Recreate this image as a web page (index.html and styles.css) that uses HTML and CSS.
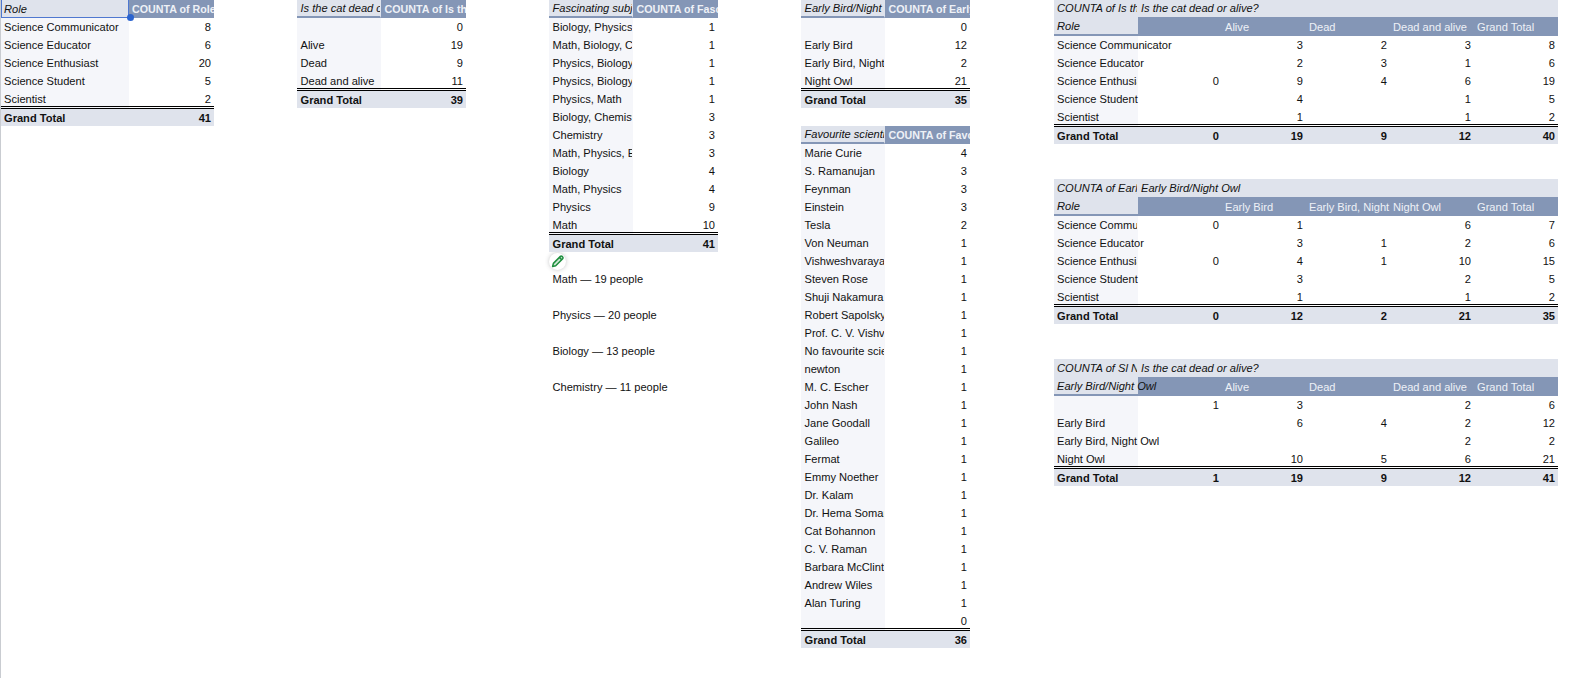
FILE: index.html
```html
<!DOCTYPE html>
<html lang="en">
<head>
<meta charset="utf-8">
<title>Pivot tables</title>
<link rel="stylesheet" href="styles.css">
</head>
<body>
<main class="sheet">
  <section class="block block-wide">
    <table class="pivot pivot-first">
      <tr><th class="corner selected">Role<span class="handle"></span></th><th class="head clip">COUNTA of Role</th></tr>
      <tr><td class="label">Science Communicator</td><td class="num">8</td></tr>
      <tr><td class="label">Science Educator</td><td class="num">6</td></tr>
      <tr><td class="label">Science Enthusiast</td><td class="num">20</td></tr>
      <tr><td class="label">Science Student</td><td class="num">5</td></tr>
      <tr><td class="label">Scientist</td><td class="num">2</td></tr>
      <tr class="grand"><td>Grand Total</td><td class="num">41</td></tr>
    </table>
  </section>

  <section class="block">
    <table class="pivot pivot-narrow">
      <tr><th class="corner clip">Is the cat dead or alive?</th><th class="head clip">COUNTA of Is the cat dead or alive?</th></tr>
      <tr><td class="label"></td><td class="num">0</td></tr>
      <tr><td class="label">Alive</td><td class="num">19</td></tr>
      <tr><td class="label">Dead</td><td class="num">9</td></tr>
      <tr><td class="label">Dead and alive</td><td class="num">11</td></tr>
      <tr class="grand"><td>Grand Total</td><td class="num">39</td></tr>
    </table>
  </section>

  <section class="block">
    <table class="pivot pivot-narrow">
      <tr><th class="corner clip">Fascinating subj</th><th class="head clip">COUNTA of Fasc</th></tr>
      <tr><td class="label clip">Biology, Physics</td><td class="num">1</td></tr>
      <tr><td class="label clip">Math, Biology, C</td><td class="num">1</td></tr>
      <tr><td class="label clip">Physics, Biology</td><td class="num">1</td></tr>
      <tr><td class="label clip">Physics, Biology</td><td class="num">1</td></tr>
      <tr><td class="label clip">Physics, Math</td><td class="num">1</td></tr>
      <tr><td class="label clip">Biology, Chemistry</td><td class="num">3</td></tr>
      <tr><td class="label clip">Chemistry</td><td class="num">3</td></tr>
      <tr><td class="label clip">Math, Physics, E</td><td class="num">3</td></tr>
      <tr><td class="label clip">Biology</td><td class="num">4</td></tr>
      <tr><td class="label clip">Math, Physics</td><td class="num">4</td></tr>
      <tr><td class="label clip">Physics</td><td class="num">9</td></tr>
      <tr><td class="label clip">Math</td><td class="num">10</td></tr>
      <tr class="grand"><td>Grand Total</td><td class="num">41</td></tr>
    </table>
    <div class="edit-row">
      <span class="edit-chip">
        <svg width="14" height="14" viewBox="0 0 14 14" aria-hidden="true"><path class="pencil" d="M2.4 9.4 9.4 2.4a1.2 1.2 0 0 1 1.7 0l.6.6a1.2 1.2 0 0 1 0 1.7L4.7 11.7 1.6 12.5Z"/><path class="pencil" d="M8.4 3.4 10.7 5.7"/></svg>
      </span>
    </div>
    <p class="note">Math — 19 people</p>
    <p class="note">Physics — 20 people</p>
    <p class="note">Biology — 13 people</p>
    <p class="note">Chemistry — 11 people</p>
  </section>

  <section class="block">
    <table class="pivot pivot-narrow">
      <tr><th class="corner clip">Early Bird/Night Owl</th><th class="head clip">COUNTA of Early Bird/Night Owl</th></tr>
      <tr><td class="label"></td><td class="num">0</td></tr>
      <tr><td class="label clip">Early Bird</td><td class="num">12</td></tr>
      <tr><td class="label clip">Early Bird, Night Owl</td><td class="num">2</td></tr>
      <tr><td class="label clip">Night Owl</td><td class="num">21</td></tr>
      <tr class="grand"><td>Grand Total</td><td class="num">35</td></tr>
    </table>
    <table class="pivot pivot-narrow pivot-next">
      <tr><th class="corner clip">Favourite scientist</th><th class="head clip">COUNTA of Favo</th></tr>
      <tr><td class="label clip">Marie Curie</td><td class="num">4</td></tr>
      <tr><td class="label clip">S. Ramanujan</td><td class="num">3</td></tr>
      <tr><td class="label clip">Feynman</td><td class="num">3</td></tr>
      <tr><td class="label clip">Einstein</td><td class="num">3</td></tr>
      <tr><td class="label clip">Tesla</td><td class="num">2</td></tr>
      <tr><td class="label clip">Von Neuman</td><td class="num">1</td></tr>
      <tr><td class="label clip">Vishweshvaraya</td><td class="num">1</td></tr>
      <tr><td class="label clip">Steven Rose</td><td class="num">1</td></tr>
      <tr><td class="label clip">Shuji Nakamura</td><td class="num">1</td></tr>
      <tr><td class="label clip">Robert Sapolsky</td><td class="num">1</td></tr>
      <tr><td class="label clip">Prof. C. V. Vishv</td><td class="num">1</td></tr>
      <tr><td class="label clip">No favourite scientist</td><td class="num">1</td></tr>
      <tr><td class="label clip">newton</td><td class="num">1</td></tr>
      <tr><td class="label clip">M. C. Escher</td><td class="num">1</td></tr>
      <tr><td class="label clip">John Nash</td><td class="num">1</td></tr>
      <tr><td class="label clip">Jane Goodall</td><td class="num">1</td></tr>
      <tr><td class="label clip">Galileo</td><td class="num">1</td></tr>
      <tr><td class="label clip">Fermat</td><td class="num">1</td></tr>
      <tr><td class="label clip">Emmy Noether</td><td class="num">1</td></tr>
      <tr><td class="label clip">Dr. Kalam</td><td class="num">1</td></tr>
      <tr><td class="label clip">Dr. Hema Soman</td><td class="num">1</td></tr>
      <tr><td class="label clip">Cat Bohannon</td><td class="num">1</td></tr>
      <tr><td class="label clip">C. V. Raman</td><td class="num">1</td></tr>
      <tr><td class="label clip">Barbara McClintock</td><td class="num">1</td></tr>
      <tr><td class="label clip">Andrew Wiles</td><td class="num">1</td></tr>
      <tr><td class="label clip">Alan Turing</td><td class="num">1</td></tr>
      <tr><td class="label"></td><td class="num">0</td></tr>
      <tr class="grand"><td>Grand Total</td><td class="num">36</td></tr>
    </table>
  </section>

  <section class="block block-cross">
    <table class="pivot cross">
      <tr class="band"><th class="clip">COUNTA of Is the cat</th><th colspan="5">Is the cat dead or alive?</th></tr>
      <tr><th class="corner">Role</th><th class="head"></th><th class="head">Alive</th><th class="head">Dead</th><th class="head">Dead and alive</th><th class="head">Grand Total</th></tr>
      <tr><td class="label">Science Communicator</td><td></td><td class="num">3</td><td class="num">2</td><td class="num">3</td><td class="num">8</td></tr>
      <tr><td class="label">Science Educator</td><td></td><td class="num">2</td><td class="num">3</td><td class="num">1</td><td class="num">6</td></tr>
      <tr><td class="label clip">Science Enthusiast</td><td class="num">0</td><td class="num">9</td><td class="num">4</td><td class="num">6</td><td class="num">19</td></tr>
      <tr><td class="label">Science Student</td><td></td><td class="num">4</td><td></td><td class="num">1</td><td class="num">5</td></tr>
      <tr><td class="label">Scientist</td><td></td><td class="num">1</td><td></td><td class="num">1</td><td class="num">2</td></tr>
      <tr class="grand"><td>Grand Total</td><td class="num">0</td><td class="num">19</td><td class="num">9</td><td class="num">12</td><td class="num">40</td></tr>
    </table>

    <table class="pivot cross cross-next">
      <tr class="band"><th class="clip">COUNTA of Early Bird</th><th colspan="5">Early Bird/Night Owl</th></tr>
      <tr><th class="corner">Role</th><th class="head"></th><th class="head">Early Bird</th><th class="head clip">Early Bird, Night Owl</th><th class="head">Night Owl</th><th class="head">Grand Total</th></tr>
      <tr><td class="label clip">Science Communicator</td><td class="num">0</td><td class="num">1</td><td></td><td class="num">6</td><td class="num">7</td></tr>
      <tr><td class="label">Science Educator</td><td></td><td class="num">3</td><td class="num">1</td><td class="num">2</td><td class="num">6</td></tr>
      <tr><td class="label clip">Science Enthusiast</td><td class="num">0</td><td class="num">4</td><td class="num">1</td><td class="num">10</td><td class="num">15</td></tr>
      <tr><td class="label">Science Student</td><td></td><td class="num">3</td><td></td><td class="num">2</td><td class="num">5</td></tr>
      <tr><td class="label">Scientist</td><td></td><td class="num">1</td><td></td><td class="num">1</td><td class="num">2</td></tr>
      <tr class="grand"><td>Grand Total</td><td class="num">0</td><td class="num">12</td><td class="num">2</td><td class="num">21</td><td class="num">35</td></tr>
    </table>

    <table class="pivot cross cross-next">
      <tr class="band"><th class="clip">COUNTA of Sl N</th><th colspan="5">Is the cat dead or alive?</th></tr>
      <tr><th class="corner">Early Bird/Night Owl</th><th class="head"></th><th class="head">Alive</th><th class="head">Dead</th><th class="head">Dead and alive</th><th class="head">Grand Total</th></tr>
      <tr><td class="label"></td><td class="num">1</td><td class="num">3</td><td></td><td class="num">2</td><td class="num">6</td></tr>
      <tr><td class="label">Early Bird</td><td></td><td class="num">6</td><td class="num">4</td><td class="num">2</td><td class="num">12</td></tr>
      <tr><td class="label">Early Bird, Night Owl</td><td></td><td></td><td></td><td class="num">2</td><td class="num">2</td></tr>
      <tr><td class="label">Night Owl</td><td></td><td class="num">10</td><td class="num">5</td><td class="num">6</td><td class="num">21</td></tr>
      <tr class="grand"><td>Grand Total</td><td class="num">1</td><td class="num">19</td><td class="num">9</td><td class="num">12</td><td class="num">41</td></tr>
    </table>
  </section>
</main>
</body>
</html>
```

FILE: styles.css
```css
html, body {
  margin: 0;
  padding: 0;
  background: #fff;
  overflow: hidden;
}

.sheet {
  display: flex;
  box-sizing: border-box;
  width: 1574px;
  height: 678px;
  border-left: 1px solid #c9ccd1;
  font-family: "Liberation Sans", Arial, sans-serif;
  font-size: 11.1px;
  color: #111;
}

.block {
  flex: none;
  width: 169px;
  margin-left: 83px;
}

.block-wide {
  width: 213px;
  margin-left: 0;
}

.block-cross {
  width: 504px;
  margin-left: 84px;
}

.pivot {
  width: 100%;
  table-layout: fixed;
  border-collapse: separate;
  border-spacing: 0;
}

.pivot-next {
  margin-top: 18px;
}

.cross-next {
  margin-top: 35px;
}

.pivot th,
.pivot td {
  box-sizing: border-box;
  height: 18px;
  padding: 0 3px;
  line-height: 18px;
  font-weight: 400;
  text-align: left;
  white-space: nowrap;
}

.pivot-narrow th,
.pivot-narrow td {
  padding-left: 3.5px;
}

.pivot-first th:first-child,
.pivot-first td:first-child {
  width: 128px;
}

.pivot-narrow tr > :first-child {
  width: 84px;
}

.pivot .corner {
  position: relative;
  background: #dfe3ec;
  border-bottom: 2px solid #8496b6;
  font-style: italic;
  line-height: 16px;
}

.pivot .selected {
  border: 1px solid #4f78d0;
  border-top: 0;
  padding-left: 2px;
}

.handle {
  position: absolute;
  right: -6px;
  bottom: -4px;
  width: 7px;
  height: 7px;
  border-radius: 50%;
  background: #2a63cf;
}

.pivot .head {
  background: #8496b6;
  color: #eef1f6;
}

.pivot-first .head,
.pivot-narrow .head {
  font-size: 10.7px;
  font-weight: 700;
}

.cross tr:nth-child(2) th {
  height: 19px;
}

.pivot .band th {
  background: #dfe3ec;
  font-style: italic;
}

.cross:first-child .band th {
  height: 17px;
  line-height: 17px;
}

.pivot .label {
  background: #f5f6fa;
}

.pivot .num {
  text-align: right;
}

.pivot .clip {
  overflow: hidden;
}

.pivot .label.clip {
  border-right: 1px solid #f5f6fa;
}

.pivot .corner.clip,
.pivot .band .clip {
  border-right: 1px solid #dfe3ec;
}

.pivot .grand td {
  position: relative;
  padding-top: 2px;
  background: #dfe3ec;
  font-weight: 700;
  line-height: 16px;
}

.pivot .grand td::before {
  content: "";
  position: absolute;
  top: -2px;
  left: 0;
  right: 0;
  height: 1px;
  border-top: 1px solid #000;
  border-bottom: 1px solid #000;
}

.edit-row {
  display: flex;
  align-items: center;
  height: 18px;
}

.edit-chip {
  display: flex;
  align-items: center;
  justify-content: center;
  width: 17px;
  height: 17px;
  border-radius: 50%;
  background: #fff;
  box-shadow: 0 0 4px rgba(60, 64, 67, 0.3);
}

.pencil {
  fill: #cfe8d6;
  stroke: #1e8e3e;
  stroke-width: 1.5;
  stroke-linejoin: round;
}

.note {
  height: 18px;
  margin: 0 0 18px;
  padding-left: 3.5px;
  line-height: 18px;
}
```
